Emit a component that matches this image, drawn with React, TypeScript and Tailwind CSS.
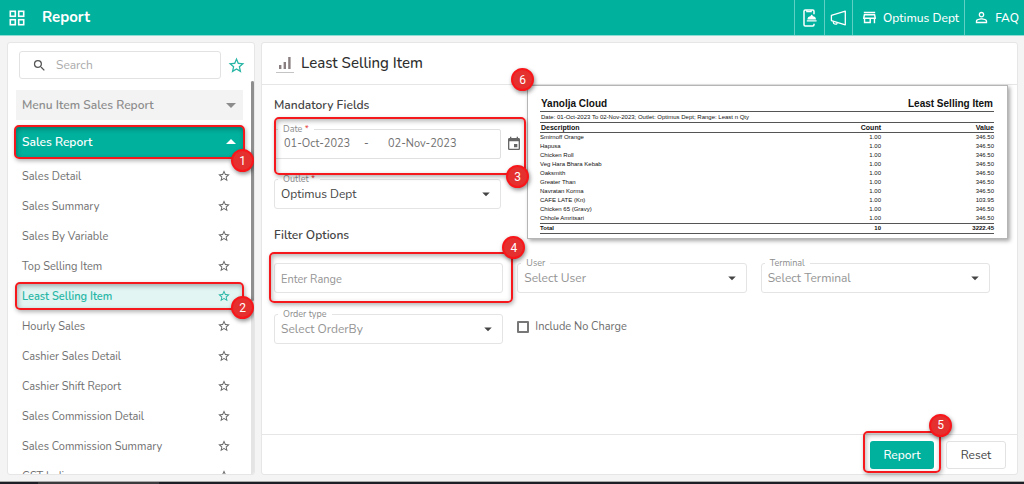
import type { ReactNode } from 'react';
import {
  MdArrowDropDown,
  MdArrowDropUp,
  MdEvent,
  MdOutlineStore,
  MdPersonOutline,
  MdSearch,
  MdStarBorder,
} from 'react-icons/md';

const reports = [
  'Sales Detail',
  'Sales Summary',
  'Sales By Variable',
  'Top Selling Item',
  'Least Selling Item',
  'Hourly Sales',
  'Cashier Sales Detail',
  'Cashier Shift Report',
  'Sales Commission Detail',
  'Sales Commission Summary',
  'GST India',
];

const items = [
  ['Smirnoff Orange', '1.00', '346.50'],
  ['Hapusa', '1.00', '346.50'],
  ['Chicken Roll', '1.00', '346.50'],
  ['Veg Hara Bhara Kebab', '1.00', '346.50'],
  ['Oaksmith', '1.00', '346.50'],
  ['Greater Than', '1.00', '346.50'],
  ['Navratan Korma', '1.00', '346.50'],
  ['CAFE LATE (Kn)', '1.00', '103.95'],
  ['Chicken 65 (Gravy)', '1.00', '346.50'],
  ['Chhole Amritsari', '1.00', '346.50'],
];

function Badge({ n, className }: { n: number; className: string }) {
  return (
    <span
      className={`absolute z-30 flex size-[23px] items-center justify-center rounded-full border-2 border-[#f8161a] bg-[#e4302f] font-['Roboto'] text-xs text-white shadow-[1px_2px_4px_rgba(0,0,0,0.45)] ${className}`}
    >
      {n}
    </span>
  );
}

function Highlight({ className }: { className: string }) {
  return (
    <span
      className={`pointer-events-none absolute z-20 rounded-[5px] border-2 border-[#f5191d] shadow-[1px_2px_4px_rgba(0,0,0,0.3),inset_1px_2px_5px_rgba(0,0,0,0.3)] ${className}`}
    />
  );
}

function FieldLabel({ id, text, required }: { id: string; text: string; required?: boolean }) {
  return (
    <label
      htmlFor={id}
      className="absolute -top-[6px] left-1 z-10 bg-white px-[5px] text-[9px] leading-3 text-[#8c8c8c]"
    >
      {text}
      {required && <span className="text-[#e53935]"> *</span>}
    </label>
  );
}

function SelectField({
  id,
  label,
  value,
  required,
  filled,
}: {
  id: string;
  label: string;
  value: string;
  required?: boolean;
  filled?: boolean;
}) {
  return (
    <div className="relative">
      <FieldLabel id={id} text={label} required={required} />
      <select
        id={id}
        className={`block h-[30px] w-full appearance-none rounded-[3px] border border-[#e4e4e4] bg-white px-[6px] text-[12px] ${
          filled ? 'text-[#444]' : 'text-[#949494]'
        }`}
      >
        <option>{value}</option>
      </select>
      <MdArrowDropDown className="pointer-events-none absolute top-[6px] right-[6px] size-[18px] text-[#444]" />
    </div>
  );
}

function HeaderLink({ children, label }: { children: ReactNode; label?: string }) {
  return (
    <a
      href="#"
      aria-label={label}
      className="flex h-full items-center border-l border-[#5fd0c3] pr-[5px] pl-2 text-[12px] font-medium text-white"
    >
      {children}
    </a>
  );
}

function AppsIcon() {
  return (
    <svg viewBox="0 0 16 16" className="size-4" fill="none" stroke="currentColor" strokeWidth="1.6">
      <rect x="1.3" y="1.3" width="5" height="5" />
      <rect x="9.7" y="1.3" width="5" height="5" />
      <rect x="1.3" y="9.7" width="5" height="5" />
      <rect x="9.7" y="9.7" width="5" height="5" />
    </svg>
  );
}

function PhoneOrderIcon() {
  return (
    <svg viewBox="0 0 14 18" className="mr-[2px] h-[18px] w-[14px]" fill="none" stroke="currentColor" strokeWidth="1.5">
      <path d="M11 5.2V2.2Q11 1 9.8 1H2.2Q1 1 1 2.2v13.6Q1 17 2.2 17h7.6Q11 17 11 15.8v-1" />
      <path d="M3.8 1v1.6h4.4V1" strokeWidth="1.2" />
      <path
        d="M3.8 12.4h9.8v-1.1H3.8zM4.4 10.4a4.3 3.6 0 0 1 3.5-3.3 .9.9 0 1 1 1.6 0 4.3 3.6 0 0 1 3.5 3.3z"
        fill="currentColor"
        stroke="none"
      />
    </svg>
  );
}

function MegaphoneIcon() {
  return (
    <svg
      viewBox="0 0 17 16"
      className="-ml-[3px] h-4 w-[17px]"
      fill="none"
      stroke="currentColor"
      strokeWidth="1.3"
      strokeLinejoin="round"
    >
      <path d="M1.4 5.4 15.3 1.2v13.6L1.4 10.6z" />
      <path d="M3.4 11.3v1.2q0 1.1 1.1 1.4l1.4.3q1 .1 1.1-.9v-.9" />
    </svg>
  );
}

function BarsIcon() {
  return (
    <svg viewBox="0 0 12 12" className="size-3 text-[#8a7f80]" fill="currentColor">
      <path d="M0 8h2.4v4H0zM4.6 5H7v7H4.6zM9.2 0h2.4v12H9.2z" />
    </svg>
  );
}

function Sidebar() {
  return (
    <aside className="relative flex w-[248px] shrink-0 flex-col overflow-hidden rounded-[3px] border border-[#e6e6e6] bg-white">
      <div className="flex shrink-0 items-center gap-[6px] pt-2 pl-[11px]">
        <label className="flex h-7 w-[202px] items-center gap-[9px] rounded-[3px] border border-[#e2e2e2] px-3">
          <MdSearch className="size-[15px] shrink-0 text-[#555]" />
          <input
            type="search"
            aria-label="Search"
            placeholder="Search"
            className="w-full min-w-0 bg-transparent text-[12px] outline-none placeholder:text-[#ababab]"
          />
        </label>
        <button aria-label="Favourites" className="text-[#27b5a5]">
          <MdStarBorder className="size-[19px]" />
        </button>
      </div>
      <nav className="mt-[11px] ml-2 flex w-[227px] flex-col">
        <button className="flex h-[30px] shrink-0 items-center justify-between bg-[#f3f3f3] pl-[6px] text-left text-[12px] font-semibold text-[#8c8c8c]">
          Menu Item Sales Report
          <MdArrowDropDown className="size-6" />
        </button>
        <div className="relative mt-[7px] shrink-0">
          <button className="flex h-[30px] w-full items-center justify-between bg-[#00b19d] pl-[6px] text-left text-[12px] font-semibold text-white">
            Sales Report
            <MdArrowDropUp className="size-6" />
          </button>
          <Highlight className="-inset-x-[2px] -inset-y-[2px]" />
          <Badge n={1} className="top-[22px] -right-[11px]" />
        </div>
        <ul className="mt-1">
          {reports.map((name) => {
            const active = name === 'Least Selling Item';
            return (
              <li key={name} className="relative flex h-[30px] items-center">
                <a
                  href="#"
                  className={`flex h-[26px] flex-1 items-center pt-[2px] pl-[6px] text-[11px] ${
                    active ? 'bg-[#e2f5f3] font-semibold text-[#27b5a5]' : 'text-[#707070]'
                  }`}
                >
                  {name}
                </a>
                <button
                  aria-label={`Add ${name} to favourites`}
                  className={`flex h-[26px] items-center pr-3 ${
                    active ? 'bg-[#e2f5f3] text-[#27b5a5]' : 'text-[#666]'
                  }`}
                >
                  <MdStarBorder className="size-[14px]" />
                </button>
                {active && (
                  <>
                    <Highlight className="inset-y-[1px] -right-[1px] -left-[1px]" />
                    <Badge n={2} className="top-[15px] -right-[11px]" />
                  </>
                )}
              </li>
            );
          })}
        </ul>
      </nav>
      <div className="absolute top-[38px] right-0 bottom-0 w-[3px] bg-[#e4e4e4]">
        <div className="h-[56%] rounded-full bg-[#8e8e8e]" />
      </div>
    </aside>
  );
}

function ReportPreview() {
  return (
    <section className="absolute top-0 right-[9px] z-10 w-[481px] border border-[#b5b5b5] bg-white pt-3 pr-[13px] pb-1 pl-3 font-['Liberation_Sans',sans-serif] text-[6px] leading-[9px] text-[#111] shadow-[2px_2px_4px_rgba(0,0,0,0.35)]">
      <div className="flex justify-between border-b border-[#555] px-px pb-px text-[10px] leading-3 font-bold text-[#111]">
        <h3>Yanolja Cloud</h3>
        <h3>Least Selling Item</h3>
      </div>
      <p className="px-px pt-px">Date: 01-Oct-2023 To 02-Nov-2023; Outlet: Optimus Dept; Range: Least n Qty</p>
      <table className="w-full border-collapse">
        <thead>
          <tr className="border-y border-[#555] text-[7px]">
            <th className="pl-px text-left">Description</th>
            <th className="w-[90px] text-right">Count</th>
            <th className="w-[113px] text-right">Value</th>
          </tr>
        </thead>
        <tbody>
          {items.map(([name, count, value]) => (
            <tr key={name}>
              <td>{name}</td>
              <td className="text-right">{count}</td>
              <td className="text-right">{value}</td>
            </tr>
          ))}
        </tbody>
        <tfoot>
          <tr className="border-y border-[#555] font-bold">
            <td>Total</td>
            <td className="text-right">10</td>
            <td className="text-right">3222.45</td>
          </tr>
        </tfoot>
      </table>
      <Badge n={6} className="-top-[18px] -left-[17px]" />
    </section>
  );
}

export default function App() {
  return (
    <div className="flex h-screen flex-col overflow-hidden bg-[#f4f4f4] font-['Nunito','Lato',sans-serif]">
      <header className="flex h-9 shrink-0 items-center border-b border-[#8fdcd3] bg-[#00b19d] text-white">
        <button aria-label="Apps" className="ml-[9px]">
          <AppsIcon />
        </button>
        <h1 className="ml-[17px] flex-1 text-[15px] font-bold">Report</h1>
        <HeaderLink label="Orders">
          <PhoneOrderIcon />
        </HeaderLink>
        <HeaderLink label="Announcements">
          <MegaphoneIcon />
        </HeaderLink>
        <HeaderLink>
          <MdOutlineStore className="mr-[5px] size-[17px]" />
          Optimus Dept
        </HeaderLink>
        <HeaderLink>
          <MdPersonOutline className="mr-[5px] size-[17px]" />
          FAQ
        </HeaderLink>
      </header>

      <div className="flex min-h-0 flex-1 gap-[6px] pt-[6px] pr-[6px] pb-[6px] pl-[7px]">
        <Sidebar />

        <main className="relative flex min-w-0 flex-1 flex-col rounded-[3px] border border-[#e6e6e6] bg-white">
          <div className="flex h-[42px] shrink-0 items-center gap-[7px] border-b border-[#e6e6e6] pl-[14px]">
            <span className="flex w-[18px] justify-center border-b border-[#c4c4c4] pt-[2px] pb-[3px]">
              <BarsIcon />
            </span>
            <h2 className="text-[15px] font-medium text-[#2e2e2e]">Least Selling Item</h2>
          </div>

          <div className="relative flex-1 pt-[10px] pr-[27px] pl-3">
            <h3 className="text-[12px] leading-5 font-semibold text-[#444]">Mandatory Fields</h3>
            <div className="relative mt-[14px] grid grid-cols-[minmax(0,227px)_auto] gap-x-[5px] gap-y-5">
              <div className="relative">
                <FieldLabel id="date-from" text="Date" required />
                <div className="flex h-[30px] items-center rounded-[2px] border border-[#e0e0e0] px-[9px] text-[11px] text-[#707070]">
                  <input
                    id="date-from"
                    defaultValue="01-Oct-2023"
                    className="w-20 min-w-0 bg-transparent outline-none"
                  />
                  <span className="w-6">-</span>
                  <input
                    aria-label="Date to"
                    defaultValue="02-Nov-2023"
                    className="w-20 min-w-0 bg-transparent outline-none"
                  />
                </div>
                <Highlight className="-top-3 -right-[25px] -bottom-4 left-0" />
                <Badge n={3} className="top-[36px] -right-[28px]" />
              </div>
              <button aria-label="Open calendar" className="justify-self-start text-[#666]">
                <MdEvent className="size-4" />
              </button>
              <SelectField id="outlet" label="Outlet" value="Optimus Dept" required filled />
            </div>

            <h3 className="mt-4 text-[12px] leading-5 font-semibold text-[#444]">Filter Options</h3>
            <div className="mt-[18px] grid grid-cols-3 gap-x-[14px] gap-y-[21px]">
              <div className="relative">
                <input
                  aria-label="Enter Range"
                  placeholder="Enter Range"
                  className="block h-[30px] w-full rounded-[3px] border border-[#e4e4e4] px-[6px] pt-[2px] text-[11px] outline-none placeholder:text-[#949494]"
                />
                <Highlight className="-top-[11px] -right-[10px] -bottom-[10px] -left-[5px]" />
                <Badge n={4} className="-top-[27px] -right-[22px]" />
              </div>
              <SelectField id="user" label="User" value="Select User" />
              <SelectField id="terminal" label="Terminal" value="Select Terminal" />
              <SelectField id="order-type" label="Order type" value="Select OrderBy" />
              <label className="flex h-[26px] items-center gap-[6px] text-[11px] text-[#6c6c6c]">
                <input
                  type="checkbox"
                  className="size-3 appearance-none rounded-[1px] border-2 border-[#777] bg-white checked:bg-[#00b19d]"
                />
                Include No Charge
              </label>
            </div>
            <ReportPreview />
          </div>

          <footer className="flex h-10 shrink-0 items-center justify-end gap-3 border-t border-[#e6e6e6] pr-[11px]">
            <div className="relative">
              <button className="block h-7 w-16 rounded-[3px] bg-[#00b19d] text-[12px] font-medium text-white">
                Report
              </button>
              <Highlight className="-inset-x-[7px] -top-[10px] -bottom-1" />
              <Badge n={5} className="-top-[27px] -right-[18px]" />
            </div>
            <button className="h-7 w-[60px] rounded-[3px] border border-[#e2e2e2] bg-white text-[12px] text-[#444]">
              Reset
            </button>
          </footer>
        </main>
      </div>
      <div className="flex h-[3px] shrink-0 border-t border-[#aaa] bg-[#1d1f27]">
        <span className="ml-[38px] w-[121px] bg-[#3b3b3d]" />
      </div>
    </div>
  );
}
